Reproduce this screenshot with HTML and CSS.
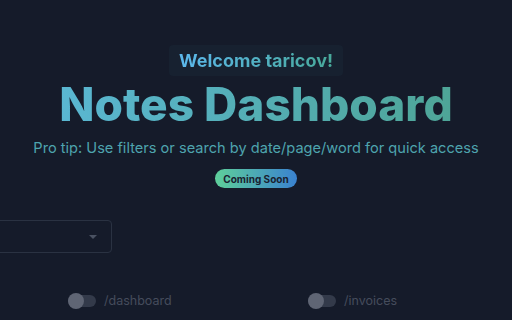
FILE: index.html
```html
<!DOCTYPE html>
<html>
<head>
<meta charset="utf-8">
<link rel="stylesheet" href="styles.css">
</head>
<body>
<main class="page">
  <header class="hero">
    <div class="welcome"><span class="welcome-text">Welcome taricov!</span></div>
    <h1 class="title">Notes Dashboard</h1>
    <p class="tip">Pro tip: Use filters or search by date/page/word for quick access</p>
    <span class="pill">Coming Soon</span>
  </header>
  <section class="filters">
    <div class="select"><span class="caret"></span></div>
  </section>
  <section class="toggles">
    <label class="toggle"><span class="switch"><span class="knob"></span></span><span class="path">/dashboard</span></label>
    <label class="toggle"><span class="switch"><span class="knob"></span></span><span class="path">/invoices</span></label>
  </section>
</main>
</body>
</html>
```
FILE: styles.css
```css
html, body {
  margin: 0;
  padding: 0;
  background: #151b2a;
  overflow: hidden;
}
body {
  width: 512px;
  height: 320px;
  font-family: Inter, "Noto Sans", sans-serif;
}
.page {
  display: flex;
  flex-direction: column;
}
.hero {
  display: flex;
  flex-direction: column;
  align-items: center;
  padding-top: 45px;
}
.welcome {
  background: #172130;
  border-radius: 4px;
  padding: 4px 10px 5px;
  height: 22px;
  display: flex;
  align-items: center;
}
.welcome-text {
  font-size: 18px;
  font-weight: 700;
  background: linear-gradient(90deg, #5cb8ec, #48a99a);
  -webkit-background-clip: text;
  background-clip: text;
  color: transparent;
}
.title {
  margin: 1px 0 0;
  font-size: 46px;
  line-height: 54px;
  font-weight: 800;
  letter-spacing: 0;
  background: linear-gradient(90deg, #5ab7d2, #4ea597);
  -webkit-background-clip: text;
  background-clip: text;
  color: transparent;
}
.tip {
  margin: 7px 0 0;
  font-size: 14.6px;
  line-height: 20px;
  color: #4ea4ae;
}
.pill {
  margin-top: 11px;
  height: 19px;
  padding: 0 8px;
  border-radius: 10px;
  background: linear-gradient(90deg, #5ecf9a, #3a82d0);
  color: #1a2230;
  font-size: 10px;
  font-weight: 700;
  display: flex;
  align-items: center;
}
.filters {
  display: flex;
  margin-top: 32px;
  margin-left: -113px;
}
.select {
  width: 209px;
  height: 31px;
  border: 1px solid #2a3242;
  border-radius: 4px;
  display: flex;
  align-items: center;
  justify-content: flex-end;
  padding-right: 14px;
  box-sizing: content-box;
}
.caret {
  width: 0;
  height: 0;
  border-left: 4px solid transparent;
  border-right: 4px solid transparent;
  border-top: 4px solid #4a5262;
}
.toggles {
  display: grid;
  grid-template-columns: 240px 200px;
  padding-left: 68px;
  margin-top: 40px;
}
.toggle {
  display: flex;
  align-items: center;
  gap: 8px;
}
.switch {
  width: 28px;
  height: 12px;
  border-radius: 6px;
  background: #333a4a;
  position: relative;
  display: block;
}
.knob {
  position: absolute;
  left: 0;
  top: -2px;
  width: 16px;
  height: 16px;
  border-radius: 50%;
  background: #5f6574;
}
.path {
  font-size: 12.5px;
  color: #454c5c;
}
```
